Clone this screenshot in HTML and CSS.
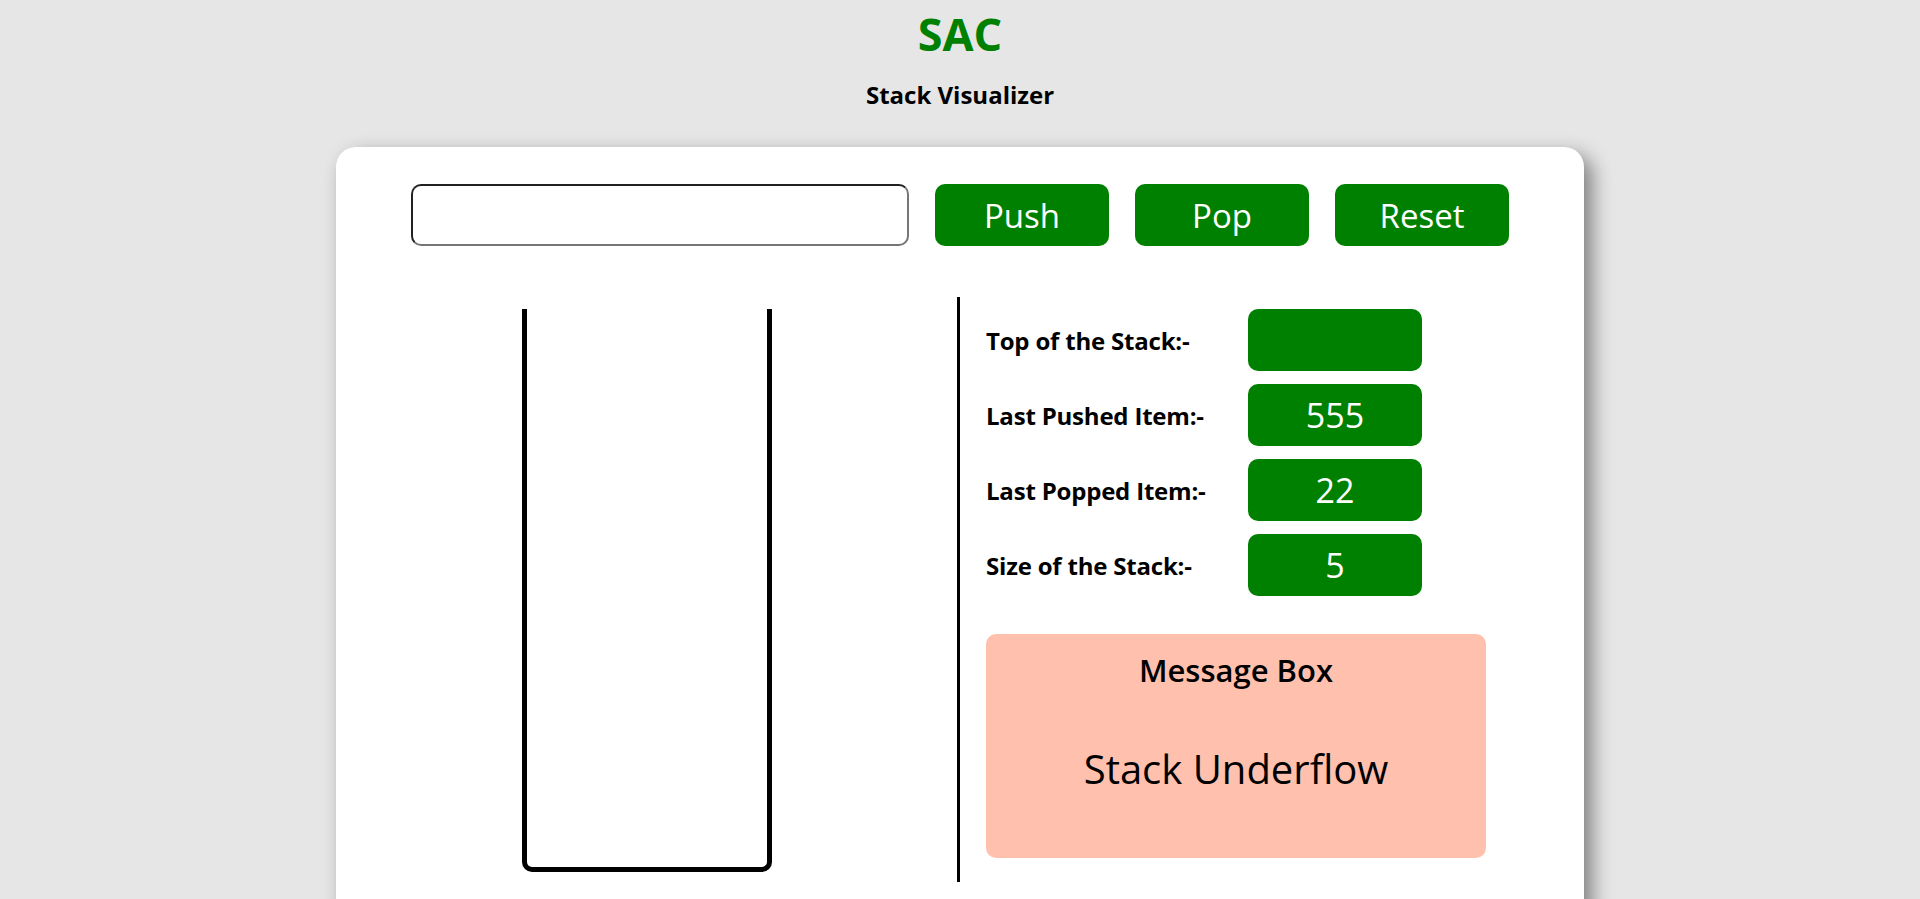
FILE: index.html
```html
<!DOCTYPE html>
<html lang="en">
<head>
<meta charset="utf-8">
<title>Stack Visualizer</title>
<link rel="stylesheet" href="styles.css">
</head>
<body>
<header class="header">
  <h1 class="brand">SAC</h1>
  <h2 class="subtitle">Stack Visualizer</h2>
</header>
<main class="card">
  <div class="controls">
    <input class="value-input" type="text" aria-label="value">
    <button class="btn">Push</button>
    <button class="btn">Pop</button>
    <button class="btn">Reset</button>
  </div>
  <div class="board">
    <div class="stack-col">
      <div class="stack-box"></div>
    </div>
    <div class="info-col">
      <div class="info-row">
        <span class="info-label">Top of the Stack:-</span>
        <span class="info-value"></span>
      </div>
      <div class="info-row">
        <span class="info-label">Last Pushed Item:-</span>
        <span class="info-value">555</span>
      </div>
      <div class="info-row">
        <span class="info-label">Last Popped Item:-</span>
        <span class="info-value">22</span>
      </div>
      <div class="info-row">
        <span class="info-label">Size of the Stack:-</span>
        <span class="info-value">5</span>
      </div>
      <div class="message-box">
        <h3 class="message-title">Message Box</h3>
        <p class="message-text">Stack Underflow</p>
      </div>
    </div>
  </div>
</main>
</body>
</html>
```
FILE: styles.css
```css
* { box-sizing: border-box; }

body {
  margin: 0;
  background: #e6e6e6;
  font-family: "Open Sans", "Noto Sans", sans-serif;
  color: #000;
}

.header {
  padding-top: 9px;
  text-align: center;
}

.brand {
  margin: 0;
  font-size: 45px;
  line-height: 50px;
  font-weight: 700;
  color: #008000;
}

.subtitle {
  margin: 23px 0 0;
  font-size: 24px;
  line-height: 26px;
  font-weight: 700;
}

.card {
  width: 1248px;
  margin: 39px auto 0;
  background: #fff;
  border-radius: 20px;
  box-shadow: 8px 8px 20px rgba(0, 0, 0, 0.45);
  padding: 37px 0 40px;
}

.controls {
  display: flex;
  justify-content: center;
  gap: 26px;
  height: 62px;
}

.value-input {
  width: 498px;
  height: 62px;
  border: 2px inset #767676;
  border-radius: 10px;
  font-size: 24px;
  padding: 0 12px;
  font-family: inherit;
}

.btn {
  width: 174px;
  height: 62px;
  border: none;
  border-radius: 10px;
  background: #008000;
  color: #fff;
  font-family: "Open Sans", "Noto Sans", sans-serif;
  font-size: 33px;
  font-weight: 400;
  cursor: pointer;
}

.board {
  display: flex;
  margin-top: 51px;
}

.stack-col {
  flex: 1;
  display: flex;
  justify-content: center;
  padding: 12px 0 10px;
}

.stack-box {
  width: 250px;
  height: 563px;
  border: 5px solid #000;
  border-top: none;
  border-radius: 0 0 10px 10px;
}

.info-col {
  width: 627px;
  border-left: 3px solid #000;
  padding: 12px 0 24px 26px;
}

.info-row {
  display: flex;
  align-items: center;
  height: 62px;
  margin-bottom: 13px;
}

.info-label {
  width: 262px;
  font-size: 24px;
  font-weight: 700;
  letter-spacing: -0.2px;
}

.info-value {
  width: 174px;
  height: 62px;
  border-radius: 10px;
  background: #008000;
  color: #fff;
  font-size: 34px;
  display: flex;
  align-items: center;
  justify-content: center;
}

.message-box {
  width: 500px;
  height: 224px;
  margin-top: 38px;
  background: #ffc0ad;
  border-radius: 10px;
  text-align: center;
  padding-top: 16px;
}

.message-title {
  margin: 0;
  font-size: 31px;
  line-height: 40px;
  font-weight: 600;
}

.message-text {
  margin: 55px 0 0;
  font-size: 40px;
  line-height: 48px;
}
```
